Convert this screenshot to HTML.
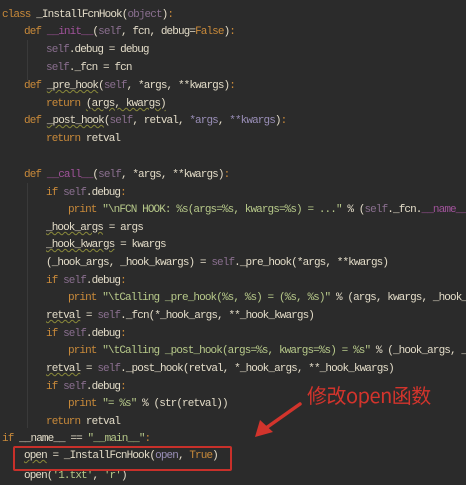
<!DOCTYPE html>
<html><head><meta charset="utf-8"><style>
html,body{margin:0;padding:0;}
body{width:466px;height:484px;background:#2b2b2b;position:relative;overflow:hidden;font-family:"Liberation Mono","DejaVu Sans Mono",monospace;font-size:11px;letter-spacing:-0.9px;color:#e3dcc8;}
.l{position:absolute;right:0;overflow:hidden;white-space:pre;line-height:14px;height:16px;}
.k{color:#c98a3a}.s{color:#8a6f8f}.m{color:#a0529a}.g{color:#b7c98a}.n{color:#9a8fb8}
.u{text-decoration:underline wavy #8a8a3a;text-decoration-thickness:1px}
.gd{position:absolute;width:1px;background:#3a3a3a}
</style></head><body>
<div class="gd" style="left:27px;top:40px;height:40px"></div>
<div class="gd" style="left:27px;top:183px;height:245px"></div>
<div class="l" style="left:2px;top:8px"><span class="k">class</span> _InstallFcnHook(<span class="s">object</span>)<span class="k">:</span></div>
<div class="l" style="left:24px;top:25px"><span class="k">def</span> <span class="m">__init__</span>(<span class="s">self</span>, fcn, debug=<span class="k">False</span>)<span class="k">:</span></div>
<div class="l" style="left:46px;top:43px"><span class="s">self</span>.debug = debug</div>
<div class="l" style="left:46px;top:61px"><span class="s">self</span>._fcn = fcn</div>
<div class="l" style="left:24px;top:79px"><span class="k">def</span> <span class="u">_pre_hook</span>(<span class="s">self</span>, *args, **kwargs)<span class="k">:</span></div>
<div class="l" style="left:46px;top:97px"><span class="k">return</span> <span class="u">(args, kwargs)</span></div>
<div class="l" style="left:24px;top:114px"><span class="k">def</span> <span class="u">_post_hook</span>(<span class="s">self</span>, retval, <span class="n">*args</span>, <span class="n">**kwargs</span>)<span class="k">:</span></div>
<div class="l" style="left:46px;top:132px"><span class="k">return</span> retval</div>
<div class="l" style="left:24px;top:168px"><span class="k">def</span> <span class="m">__call__</span>(<span class="s">self</span>, *args, **kwargs)<span class="k">:</span></div>
<div class="l" style="left:46px;top:186px"><span class="k">if</span> <span class="s">self</span>.debug<span class="k">:</span></div>
<div class="l" style="left:68px;top:203px"><span class="k">print</span> <span class="g">"\nFCN HOOK: %s(args=%s, kwargs=%s) = ..."</span> % (<span class="s">self</span>._fcn.<span class="m">__name__</span>,</div>
<div class="l" style="left:46px;top:221px"><span class="u">_hook_args</span> = args</div>
<div class="l" style="left:46px;top:238px"><span class="u">_hook_kwargs</span> = kwargs</div>
<div class="l" style="left:46px;top:256px">(_hook_args, _hook_kwargs) = <span class="s">self</span>._pre_hook(*args, **kwargs)</div>
<div class="l" style="left:46px;top:274px"><span class="k">if</span> <span class="s">self</span>.debug<span class="k">:</span></div>
<div class="l" style="left:68px;top:291px"><span class="k">print</span> <span class="g">"\tCalling _pre_hook(%s, %s) = (%s, %s)"</span> % (args, kwargs, _hook_args</div>
<div class="l" style="left:46px;top:309px"><span class="u">retval</span> = <span class="s">self</span>._fcn(*_hook_args, **_hook_kwargs)</div>
<div class="l" style="left:46px;top:327px"><span class="k">if</span> <span class="s">self</span>.debug<span class="k">:</span></div>
<div class="l" style="left:68px;top:344px"><span class="k">print</span> <span class="g">"\tCalling _post_hook(args=%s, kwargs=%s) = %s"</span> % (_hook_args, _h</div>
<div class="l" style="left:46px;top:362px"><span class="u">retval</span> = <span class="s">self</span>._post_hook(retval, *_hook_args, **_hook_kwargs)</div>
<div class="l" style="left:46px;top:380px"><span class="k">if</span> <span class="s">self</span>.debug<span class="k">:</span></div>
<div class="l" style="left:68px;top:397px"><span class="k">print</span> <span class="g">"= %s"</span> % (str(retval))</div>
<div class="l" style="left:46px;top:415px"><span class="k">return</span> retval</div>
<div class="l" style="left:2px;top:432px"><span class="k">if</span> __name__ == <span class="g">"__main__"</span><span class="k">:</span></div>
<div class="l" style="left:24px;top:449px"><span class="u">open</span> = _InstallFcnHook(<span class="n">open</span>, <span class="k">True</span>)</div>
<div class="l" style="left:24px;top:469px">open(<span class="g">'1.txt'</span>, <span class="g">'r'</span>)</div>
<div style="position:absolute;left:13px;top:446px;width:215px;height:21px;border:2px solid #c8302a;border-radius:2px"></div>
<div style="position:absolute;left:307px;top:381px;font-family:'Noto Sans CJK SC',sans-serif;font-size:20px;letter-spacing:-0.5px;color:#d2342c;line-height:28px;white-space:nowrap">修改open函数</div>
<svg style="position:absolute;left:0;top:0" width="466" height="484"><line x1="300" y1="404" x2="266" y2="428" stroke="#d2342c" stroke-width="3.5" stroke-linecap="round"/><polygon points="255,437 260,420 273,432" fill="#d2342c"/></svg>
</body></html>
